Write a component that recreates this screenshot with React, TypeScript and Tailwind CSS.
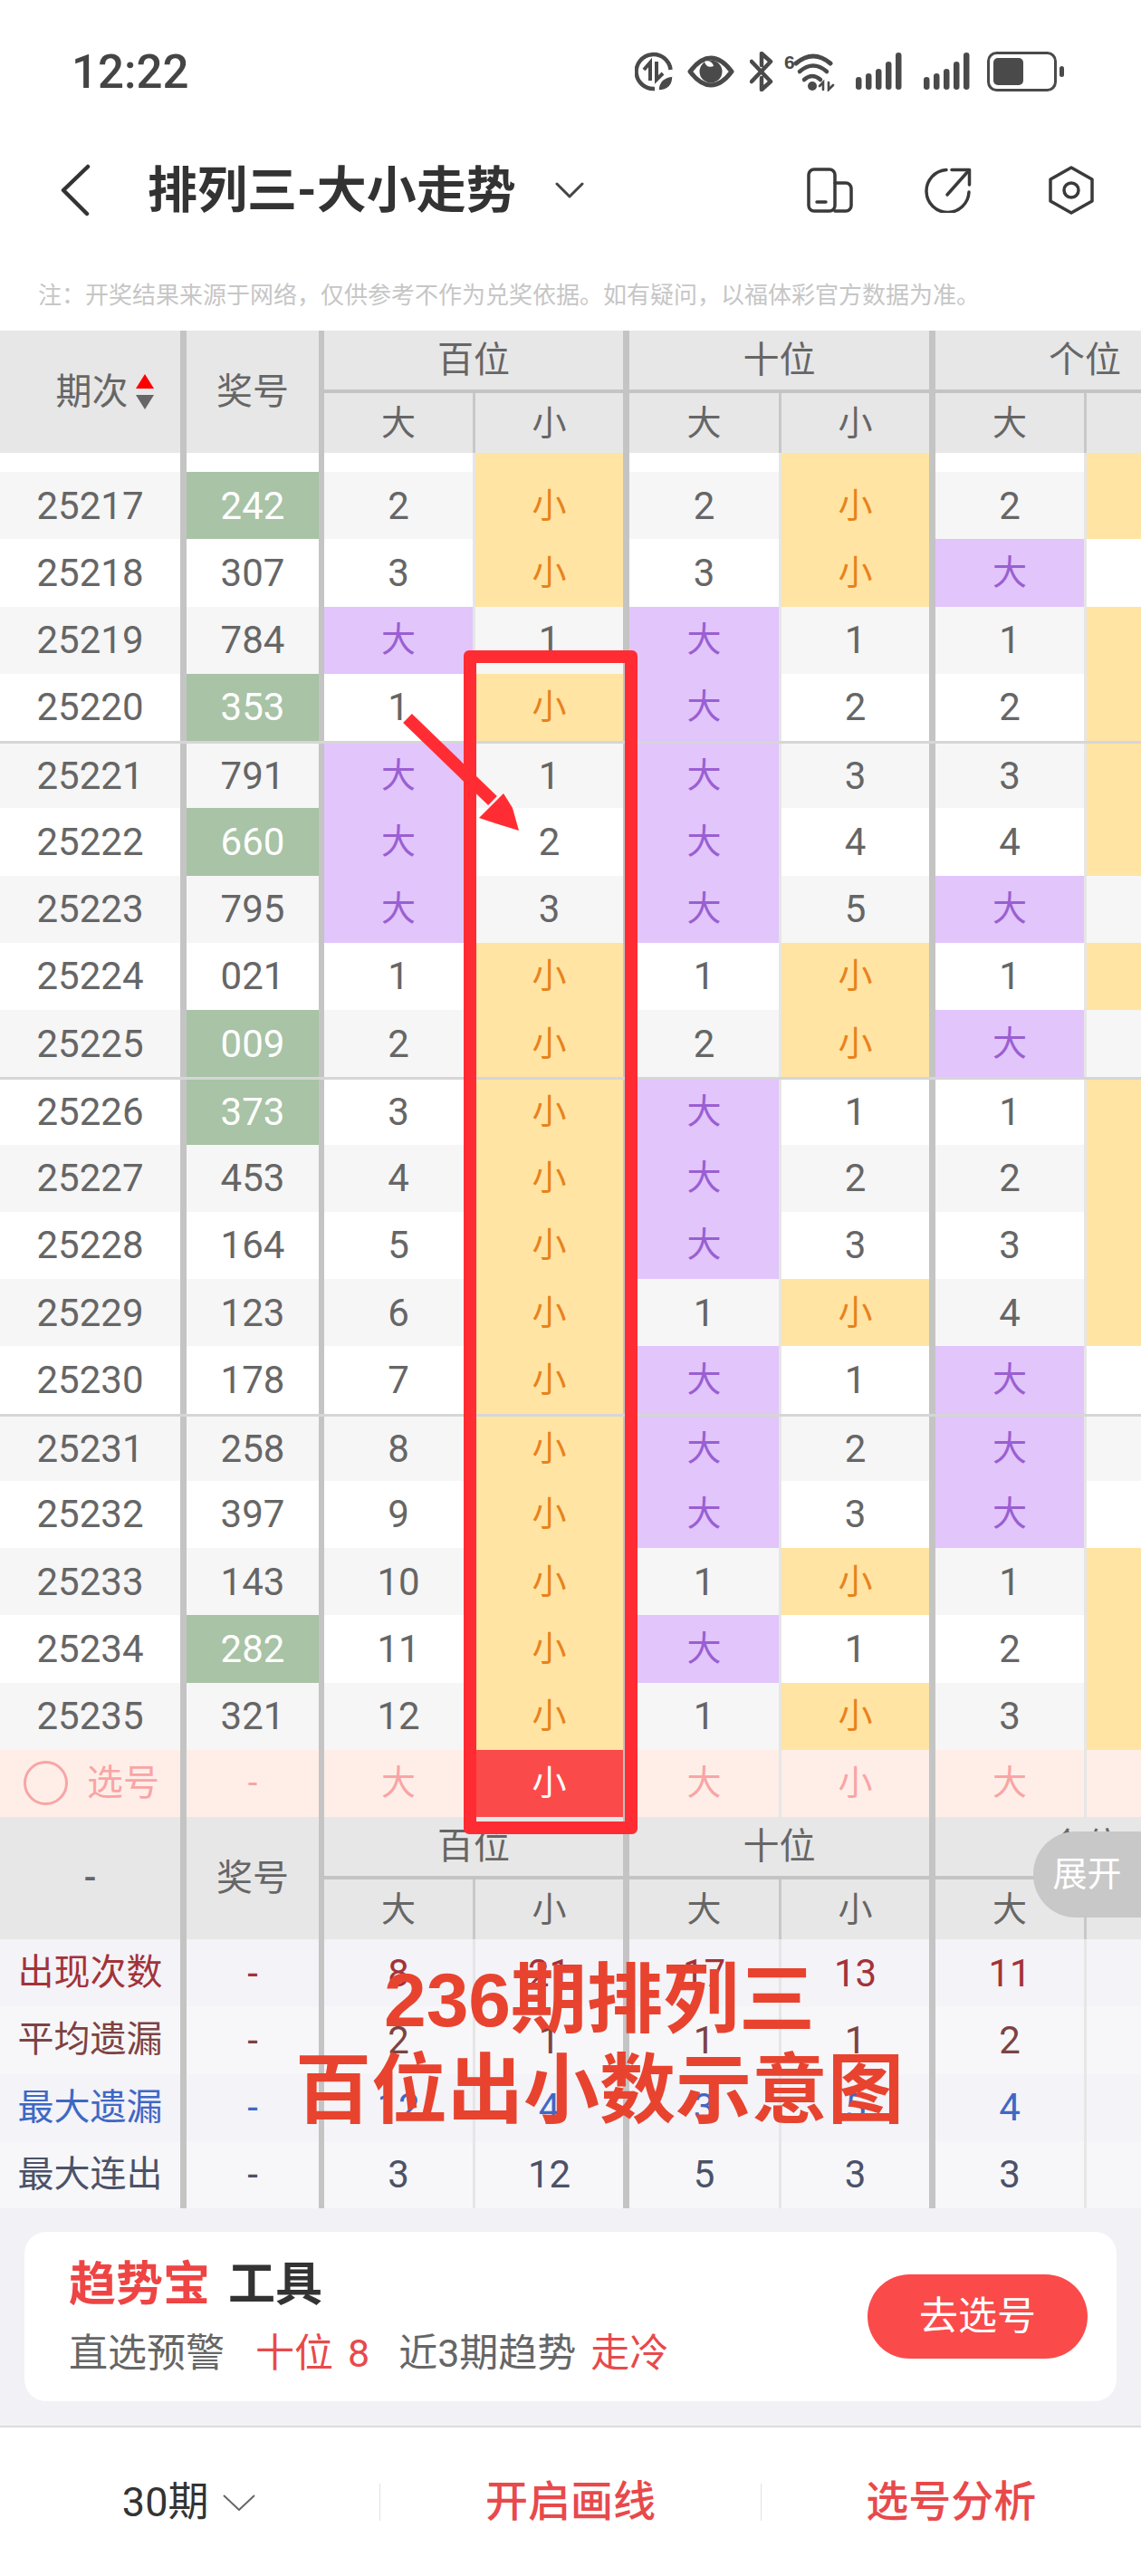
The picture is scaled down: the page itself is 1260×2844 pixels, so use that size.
import React from "react";

const COLS = "grid grid-cols-[206px_152px_167px_170px_168px_170px_167px_170px] w-[1370px]";

const NOTE =
  "\u6CE8\uFF1A\u5F00\u5956\u7ED3\u679C\u6765\u6E90\u4E8E\u7F51\u7EDC\uFF0C\u4EC5\u4F9B\u53C2\u8003\u4E0D\u4F5C\u4E3A\u5151\u5956\u4F9D\u636E\u3002\u5982\u6709\u7591\u95EE\uFF0C\u4EE5\u798F\u4F53\u5F69\u5B98\u65B9\u6570\u636E\u4E3A\u51C6\u3002";

const bodyDiv = [
  "border-r-[7px] border-[#c4c4c4]",
  "border-r-[6px] border-[#c4c4c4]",
  "border-r-[3px] border-[#e6e6e6]",
  "border-r-[7px] border-[#c4c4c4]",
  "border-r-[3px] border-[#e6e6e6]",
  "border-r-[7px] border-[#c4c4c4]",
  "border-r-[3px] border-[#e6e6e6]",
  "border-r-[7px] border-[#c4c4c4]",
];

const headDiv = [
  "border-r-[7px] border-[#c4c4c4]",
  "border-r-[6px] border-[#c4c4c4]",
  "border-r-[3px] border-[#c8c8c8]",
  "border-r-[7px] border-[#c4c4c4]",
  "border-r-[3px] border-[#c8c8c8]",
  "border-r-[7px] border-[#c4c4c4]",
  "border-r-[3px] border-[#c8c8c8]",
  "border-r-[7px] border-[#c4c4c4]",
];

const rows: [string, string, string[]][] = [
  ["25217", "242", ["2", "小", "2", "小", "2", "小"]],
  ["25218", "307", ["3", "小", "3", "小", "大", "1"]],
  ["25219", "784", ["大", "1", "大", "1", "1", "小"]],
  ["25220", "353", ["1", "小", "大", "2", "2", "小"]],
  ["25221", "791", ["大", "1", "大", "3", "3", "小"]],
  ["25222", "660", ["大", "2", "大", "4", "4", "小"]],
  ["25223", "795", ["大", "3", "大", "5", "大", "1"]],
  ["25224", "021", ["1", "小", "1", "小", "1", "小"]],
  ["25225", "009", ["2", "小", "2", "小", "大", "1"]],
  ["25226", "373", ["3", "小", "大", "1", "1", "小"]],
  ["25227", "453", ["4", "小", "大", "2", "2", "小"]],
  ["25228", "164", ["5", "小", "大", "3", "3", "小"]],
  ["25229", "123", ["6", "小", "1", "小", "4", "小"]],
  ["25230", "178", ["7", "小", "大", "1", "大", "1"]],
  ["25231", "258", ["8", "小", "大", "2", "大", "2"]],
  ["25232", "397", ["9", "小", "大", "3", "大", "3"]],
  ["25233", "143", ["10", "小", "1", "小", "1", "小"]],
  ["25234", "282", ["11", "小", "大", "1", "2", "小"]],
  ["25235", "321", ["12", "小", "1", "小", "3", "小"]],
];

const green = ["242", "353", "660", "009", "373", "282"];

const stats = [
  { label: "出现次数", vals: ["8", "21", "17", "13", "11", "19"], text: "text-[#a33338]", bg: "bg-[#f3f3f8]" },
  { label: "平均遗漏", vals: ["2", "1", "1", "1", "2", "1"], text: "text-[#7c4343]", bg: "bg-[#f7f7f9]" },
  { label: "最大遗漏", vals: ["12", "4", "3", "5", "4", "3"], text: "text-[#3f68c4]", bg: "bg-[#f3f3f8]" },
  { label: "最大连出", vals: ["3", "12", "5", "3", "3", "4"], text: "text-[#4b5268]", bg: "bg-[#f7f7f9]" },
];

function Signal() {
  return (
    <svg width="52" height="44" viewBox="0 0 52 44" fill="#4a4a4a">
      <rect x="0" y="28" width="6.5" height="14" rx="3.2" />
      <rect x="11" y="24" width="6.5" height="18" rx="3.2" />
      <rect x="22" y="19" width="6.5" height="23" rx="3.2" />
      <rect x="33" y="11" width="6.5" height="31" rx="3.2" />
      <rect x="44" y="1" width="6.5" height="41" rx="3.2" />
    </svg>
  );
}

function StatusIcons() {
  return (
    <div className="ml-auto mr-[84px] flex items-center">
      <svg width="42" height="44" viewBox="0 0 42 44" fill="none" stroke="#4a4a4a" strokeWidth="4.5">
        <path d="M39.5 20 A19 19 0 1 0 22 41" />
        <path d="M17 32 V12 L10 20" strokeWidth="4" />
        <path d="M24 11 V31 L31 24" strokeWidth="4" />
        <path d="M26 43 C26 33 32 28 42 27 C42 37 37 43 26 43Z" fill="#4a4a4a" stroke="#fff" strokeWidth="1.5" />
      </svg>
      <svg className="ml-[16px]" width="52" height="36" viewBox="0 0 52 36" fill="none">
        <path d="M3 18 C12 6 20 3 26 3 C32 3 40 6 49 18 C40 30 32 33 26 33 C20 33 12 30 3 18Z" stroke="#4a4a4a" strokeWidth="5" strokeLinejoin="round" />
        <circle cx="26" cy="18" r="12.5" fill="#4a4a4a" />
        <path d="M19 7 C20 12 24 14 29 12 C28 8 24 5 19 7Z" fill="#fff" />
      </svg>
      <svg className="ml-[17px]" width="26" height="44" viewBox="0 0 26 44" fill="none" stroke="#4a4a4a" strokeWidth="4.5" strokeLinecap="round" strokeLinejoin="round">
        <path d="M2 11 L23 33 L13 42 V29" />
        <path d="M2 33 L23 11 L13 2 V15" />
      </svg>
      <svg className="ml-[12px]" width="56" height="44" viewBox="0 0 56 44" fill="none" stroke="#4a4a4a" strokeLinecap="round">
        <text x="0" y="19" fontSize="21" fontWeight="700" fill="#4a4a4a" stroke="none" fontFamily="'Liberation Sans', sans-serif">6</text>
        <path d="M13 13 Q32 -3 51 13" strokeWidth="5" />
        <path d="M17 22 Q32 9 47 22" strokeWidth="4.5" />
        <path d="M22 31 Q31 23 40 31" strokeWidth="4.5" />
        <circle cx="31" cy="38" r="5" fill="#4a4a4a" stroke="none" />
        <path d="M43 42 V34 L39 38" strokeWidth="2.6" />
        <path d="M49 34 V42 L54 37" strokeWidth="2.6" />
      </svg>
      <div className="ml-[23px] flex">
        <Signal />
      </div>
      <div className="ml-[23px] flex">
        <Signal />
      </div>
      <svg className="ml-[18px]" width="86" height="44" viewBox="0 0 86 44">
        <rect x="1.5" y="1.5" width="74" height="41" rx="9" fill="none" stroke="#4a4a4a" strokeWidth="3" />
        <rect x="7" y="7" width="33" height="30" rx="5" fill="#4a4a4a" />
        <rect x="80" y="16" width="5" height="12" rx="2.5" fill="#4a4a4a" />
      </svg>
    </div>
  );
}

function NavIcons() {
  return (
    <div className="ml-auto mr-[52px] flex items-center">
      <svg width="51" height="50" viewBox="0 0 51 50" fill="none" stroke="#3a3a3a" strokeWidth="3.5" strokeLinejoin="round" strokeLinecap="round">
        <rect x="2" y="2" width="29" height="46" rx="6" />
        <path d="M31 17 H43 A6 6 0 0 1 49 23 V42 A6 6 0 0 1 43 48 H31" />
        <path d="M11 38 H21" />
      </svg>
      <svg className="ml-[79px]" width="52" height="50" viewBox="0 0 52 50" fill="none" stroke="#3a3a3a" strokeWidth="3.5" strokeLinecap="round" strokeLinejoin="round">
        <path d="M24 2.5 A23.5 23.5 0 1 0 49 27" />
        <path d="M30 2.5 H49.5 V19" />
        <path d="M49 3 L25 30" />
      </svg>
      <svg className="ml-[85px]" width="50" height="54" viewBox="0 0 50 54" fill="none" stroke="#3a3a3a" strokeWidth="3.5" strokeLinejoin="round">
        <path d="M25 2 L48 15 V39 L25 52 L2 39 V15 Z" />
        <circle cx="25" cy="27" r="8" />
      </svg>
    </div>
  );
}

function TableHead({ first }: { first: React.ReactNode }) {
  return (
    <div className={`${COLS} bg-[#e7e7e7] text-[40px] text-[#666666] h-[135px] grid-rows-[69px_66px]`}>
      <div className={`row-span-2 flex items-center justify-center ${headDiv[0]}`}>{first}</div>
      <div className={`row-span-2 flex items-center justify-center ${headDiv[1]}`}>奖号</div>
      {["百位", "十位", "个位"].map((name) => (
        <div
          key={name}
          className="col-span-2 flex items-center justify-center border-b-[4px] border-r-[7px] border-[#c4c4c4]"
        >
          {name}
        </div>
      ))}
      {["大", "小", "大", "小", "大", "小"].map((t, i) => (
        <div key={i} className={`flex items-center justify-center text-[38px] ${headDiv[i + 2]}`}>
          {t}
        </div>
      ))}
    </div>
  );
}

function Cell({ value, col }: { value: string; col: number }) {
  let color = "";
  if (value === "大") color = "bg-[#e1c5fb] text-[38px] text-[#9a5fd2]";
  if (value === "小") color = "bg-[#ffe4a3] text-[38px] text-[#e8821c]";
  return (
    <div className={`flex items-center justify-center ${bodyDiv[col + 2]} ${color}`}>
      {value}
    </div>
  );
}

export default function App() {
  return (
    <div className="relative w-[1260px] h-[2844px] overflow-hidden bg-white font-[Roboto,'Noto_Sans_CJK_SC',sans-serif]">
      {/* status bar */}
      <div className="flex h-[158px] items-center pl-[79px]">
        <span className="text-[51px] font-medium leading-none text-[#444444]">12:22</span>
        <StatusIcons />
      </div>

      {/* nav */}
      <div className="flex h-[104px] items-center pl-[66px]">
        <svg width="34" height="58" viewBox="0 0 34 58" fill="none" stroke="#333333" strokeWidth="4.5" strokeLinecap="round" strokeLinejoin="round">
          <path d="M31 3 L4 29 L30 55" />
        </svg>
        <h1 className="ml-[63px] text-[55px] font-bold leading-none text-[#333333]">排列三-大小走势</h1>
        <svg className="ml-[43px]" width="32" height="18" viewBox="0 0 32 18" fill="none" stroke="#444444" strokeWidth="3" strokeLinecap="round" strokeLinejoin="round">
          <path d="M2 2 L16 16 L30 2" />
        </svg>
        <NavIcons />
      </div>

      {/* note */}
      <div className="h-[103px] pl-[42px] pt-[46px] text-[26px] leading-[36px] text-[#c6c6c6] whitespace-nowrap">
        {NOTE}
      </div>

      {/* table */}
      <div className="overflow-hidden">
        <TableHead
          first={
            <div className="flex items-center gap-[8px] pl-[32px]">
              <span>期次</span>
              <span className="flex flex-col gap-[7px]">
                <span className="h-0 w-0 border-x-[10px] border-b-[16px] border-x-transparent border-b-[#ff0000]" />
                <span className="h-0 w-0 border-x-[10px] border-t-[16px] border-x-transparent border-t-[#666666]" />
              </span>
            </div>
          }
        />

        {/* partly scrolled row */}
        <div className={`${COLS} h-[21px] bg-white`}>
          {[0, 1, 2, 3, 4, 5, 6, 7].map((i) => (
            <div
              key={i}
              className={`${bodyDiv[i]} ${i === 3 || i === 5 || i === 7 ? "bg-[#ffe4a3]" : ""}`}
            />
          ))}
        </div>

        {rows.map(([period, num, cells], idx) => (
          <div
            key={period}
            className={`${COLS} h-[74.25px] text-[42px] text-[#666666] ${idx % 2 === 0 ? "bg-[#f6f6f6]" : "bg-white"} ${idx === 4 || idx === 9 || idx === 14 ? "border-t-[3px] border-[#d6d6d6]" : ""}`}
          >
            <div className={`flex items-center justify-center ${bodyDiv[0]}`}>{period}</div>
            <div
              className={`flex items-center justify-center ${bodyDiv[1]} ${green.includes(num) ? "bg-[#a8c3a5] text-white" : ""}`}
            >
              {num}
            </div>
            {cells.map((c, i) => (
              <Cell key={i} value={c} col={i} />
            ))}
          </div>
        ))}

        {/* pick row */}
        <div className={`${COLS} h-[74.25px] bg-[#ffeee8] text-[38px] text-[#f8a5a5]`}>
          <div className={`flex items-center pl-[26px] gap-[21px] text-[40px] ${bodyDiv[0]}`}>
            <span className="h-[49px] w-[49px] rounded-full border-[3px] border-[#f8a5a5]" />
            <span>选号</span>
          </div>
          <div className={`flex items-center justify-center ${bodyDiv[1]}`}>-</div>
          {["大", "小", "大", "小", "大", "小"].map((t, i) => (
            <div
              key={i}
              className={`flex items-center justify-center ${bodyDiv[i + 2]} ${i === 1 ? "bg-[#fb4a4a] text-white" : ""}`}
            >
              {t}
            </div>
          ))}
        </div>

        <TableHead first={<span className="font-medium">-</span>} />

        {stats.map((s) => (
          <div key={s.label} className={`${COLS} h-[74.25px] text-[42px] ${s.bg} ${s.text}`}>
            <div className={`flex items-center justify-center text-[40px] ${bodyDiv[0]}`}>{s.label}</div>
            <div className={`flex items-center justify-center ${bodyDiv[1]}`}>-</div>
            {s.vals.map((v, i) => (
              <div key={i} className={`flex items-center justify-center ${bodyDiv[i + 2]}`}>
                {v}
              </div>
            ))}
          </div>
        ))}
      </div>

      {/* tool card */}
      <div className="h-[240px] bg-[#f1f1f6] px-[27px] pt-[26px]">
        <div className="flex h-[187px] items-center justify-between rounded-[24px] bg-white pl-[49px] pr-[32px]">
          <div className="self-start pt-[30px]">
            <div className="text-[52px] font-bold leading-[58px] text-[#333333]">
              <span className="text-[#ee4444]">趋势宝</span>
              <span className="ml-[20px]">工具</span>
            </div>
            <div className="mt-[17px] flex text-[43px] leading-[58px] text-[#666666] whitespace-nowrap">
              <span>直选预警</span>
              <span className="ml-[34px] text-[#e8494b]">十位</span>
              <span className="ml-[16px] text-[#e8494b]">8</span>
              <span className="ml-[32px]">近3期趋势</span>
              <span className="ml-[16px] text-[#e8494b]">走冷</span>
            </div>
          </div>
          <button className="h-[93px] w-[243px] rounded-full bg-[#fb4a4a] text-[43px] text-white">去选号</button>
        </div>
      </div>

      {/* bottom bar */}
      <div className="flex h-[167px] items-center border-t-[2px] border-[#dcdcdc] bg-white">
        <div className="flex h-[41px] flex-1 items-center justify-center border-r-[1px] border-[#e2e2e2] text-[45px] text-[#333333]">
          <span className="-ml-[2px]">30期</span>
          <svg className="ml-[16px]" width="36" height="18" viewBox="0 0 36 18" fill="none" stroke="#666666" strokeWidth="2">
            <path d="M1 1 L18 17 L35 1" />
          </svg>
        </div>
        <div className="flex h-[41px] flex-1 items-center justify-center border-r-[1px] border-[#e2e2e2] text-[47px] font-medium text-[#e8494b]">
          开启画线
        </div>
        <div className="flex h-[41px] flex-1 items-center justify-center text-[47px] font-medium text-[#e8494b]">
          选号分析
        </div>
      </div>

      {/* annotations drawn over the screenshot */}
      <div className="absolute left-[512px] top-[718px] h-[1307px] w-[192px] rounded-[6px] border-[14px] border-[#ff2d33]" />
      <svg className="absolute left-[440px] top-[780px]" width="140" height="145" viewBox="0 0 140 145">
        <path d="M10 13 L104 104" stroke="#ff2d33" strokeWidth="14" />
        <path d="M126 112 L133 137 L107 129 L89 123 L116 96 Z" fill="#ff2d33" />
      </svg>
      <div className="absolute left-[1141px] top-[2022px] flex h-[95px] w-[119px] items-center justify-center rounded-l-[47px] bg-[#c8c8c8] text-[38px] text-white">
        展开
      </div>
      <div className="absolute left-[280px] top-[2158px] w-[764px] text-center text-[84px] font-bold leading-[100px] text-[#e8432f] font-['Liberation_Sans','Noto_Sans_CJK_SC',sans-serif]">
        <div>236期排列三</div>
        <div>百位出小数示意图</div>
      </div>
    </div>
  );
}
